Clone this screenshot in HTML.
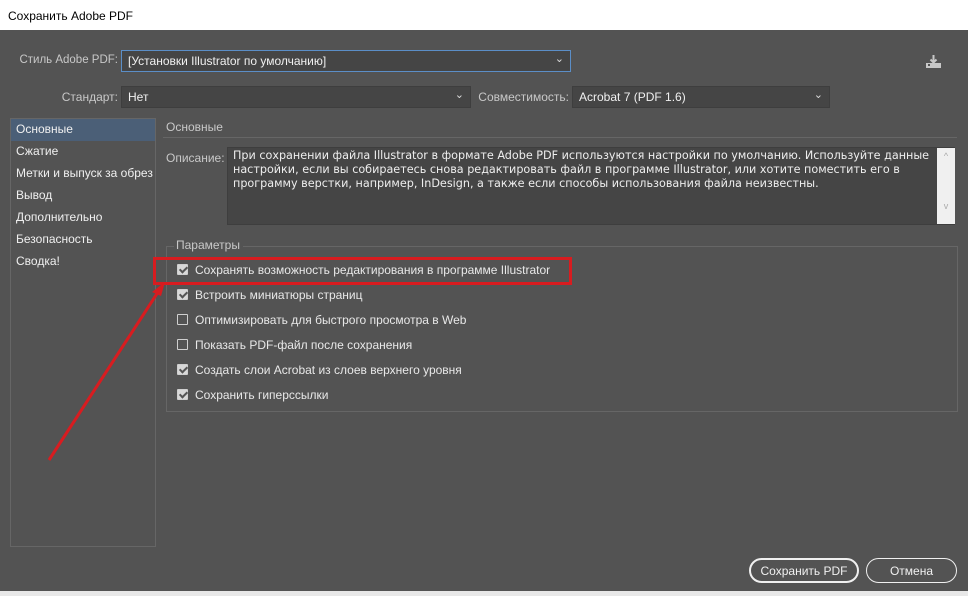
<!DOCTYPE html>
<html><head><meta charset="utf-8"><style>
*{margin:0;padding:0;box-sizing:border-box}
body{width:968px;height:596px;overflow:hidden;background:#535353;font-family:"Liberation Sans","DejaVu Sans",sans-serif;font-size:12px;color:#e8e8e8;position:relative}
.a{position:absolute;white-space:nowrap}
.title{left:0;top:0;width:968px;height:30px;background:#fff;color:#000;font-size:12px;padding:9px 0 0 8px}
.sel{position:absolute;background:#454545;border:1px solid #3e3e3e;height:22px;padding:3px 6px;color:#f0f0f0;font-size:12px}
.chev{position:absolute;right:6px;top:1px;font-size:11px;color:#ddd}
.lbl{color:#c8c8c8}
.r{text-align:right}
.list{left:10px;top:118px;width:146px;height:429px;border:1px solid #666;background:#535353}
.list div{height:22px;padding:3px 5px;color:#f0f0f0}
.cb{position:absolute;width:11px;height:11px;border:1px solid #cfcfcf;border-radius:1px}
.cb.on{background:#d8d8d8}
.cb.on::after{content:"";position:absolute;left:3px;top:0px;width:3px;height:6px;border:solid #555;border-width:0 2px 2px 0;transform:rotate(45deg)}
.btn{position:absolute;height:25px;border:2px solid #f0f0f0;border-radius:13px;color:#f0f0f0;text-align:center;padding-top:4px;font-size:12px}
</style></head><body>
<div class="a title">Сохранить Adobe PDF</div>
<div class="a lbl r" style="left:0;width:118px;top:54px;font-size:11.5px">Стиль Adobe PDF:</div>
<div class="sel" style="left:121px;top:50px;width:450px;border-color:#5b8ec7;height:22px">[Установки Illustrator по умолчанию]<span class="chev">&#8964;</span></div>
<svg class="a" style="left:926px;top:55px" width="16" height="14"><rect x="0" y="8" width="15" height="5" fill="#c8c8c8"/><rect x="2" y="9" width="2" height="2" fill="#535353"/><path d="M7.5 0V7M4.5 4.5L7.5 7.5L10.5 4.5" stroke="#c8c8c8" stroke-width="2" fill="none"/></svg>
<div class="a lbl r" style="left:0;width:118px;top:90px">Стандарт:</div>
<div class="sel" style="left:121px;top:86px;width:350px">Нет<span class="chev">&#8964;</span></div>
<div class="a lbl r" style="left:470px;width:99px;top:90px">Совместимость:</div>
<div class="sel" style="left:572px;top:86px;width:258px">Acrobat 7 (PDF 1.6)<span class="chev">&#8964;</span></div>
<div class="a list">
<div style="background:#4b5f77">Основные</div><div>Сжатие</div><div>Метки и выпуск за обрез</div><div>Вывод</div><div>Дополнительно</div><div>Безопасность</div><div>Сводка!</div>
</div>
<div class="a lbl" style="left:166px;top:120px">Основные</div>
<div class="a" style="left:163px;top:137px;width:794px;height:1px;background:#666"></div>
<div class="a lbl" style="left:166px;top:151px">Описание:</div>
<div class="a" style="left:227px;top:147px;width:728px;height:78px;background:#454545;border:1px solid #3e3e3e"></div>
<div class="a" style="left:937px;top:148px;width:18px;height:76px;background:#f0f0f0;color:#aaa;font-size:9px;text-align:center;line-height:10px;padding-top:3px">^<br><br><br><br><br>v</div>
<div class="a" style="left:233px;top:149px;font-family:'DejaVu Sans',sans-serif;font-size:11.2px;line-height:14px;color:#eee;white-space:normal;width:700px">При сохранении файла Illustrator в формате Adobe PDF используются настройки по умолчанию. Используйте данные настройки, если вы собираетесь снова редактировать файл в программе Illustrator, или хотите поместить его в программу верстки, например, InDesign, а также если способы использования файла неизвестны.</div>
<div class="a" style="left:166px;top:246px;width:792px;height:166px;border:1px solid #666;border-top-color:#666"></div>
<div class="a lbl" style="left:174px;top:238px;background:#535353;padding:0 3px 0 2px">Параметры</div>
<div class="cb on" style="left:177px;top:264px"></div><div class="a" style="left:195px;top:263px">Сохранять возможность редактирования в программе Illustrator</div>
<div class="cb on" style="left:177px;top:289px"></div><div class="a" style="left:195px;top:288px">Встроить миниатюры страниц</div>
<div class="cb" style="left:177px;top:314px"></div><div class="a" style="left:195px;top:313px">Оптимизировать для быстрого просмотра в Web</div>
<div class="cb" style="left:177px;top:339px"></div><div class="a" style="left:195px;top:338px">Показать PDF-файл после сохранения</div>
<div class="cb on" style="left:177px;top:364px"></div><div class="a" style="left:195px;top:363px">Создать слои Acrobat из слоев верхнего уровня</div>
<div class="cb on" style="left:177px;top:389px"></div><div class="a" style="left:195px;top:388px">Сохранить гиперссылки</div>
<div class="a" style="left:153px;top:257px;width:419px;height:28px;border:3px solid #d81c20"></div>
<svg class="a" style="left:0;top:0" width="968" height="596"><path d="M49 460L160 289" stroke="#d81c20" stroke-width="3"/><path d="M165 282L152 292L161 296Z" fill="#d81c20"/></svg>
<div class="btn" style="left:749px;top:558px;width:110px">Сохранить PDF</div>
<div class="btn" style="left:866px;top:558px;width:91px;border-width:1px;padding-top:5px">Отмена</div>
<div class="a" style="left:0;top:591px;width:968px;height:5px;background:#e8e8e8"></div>
</body></html>
